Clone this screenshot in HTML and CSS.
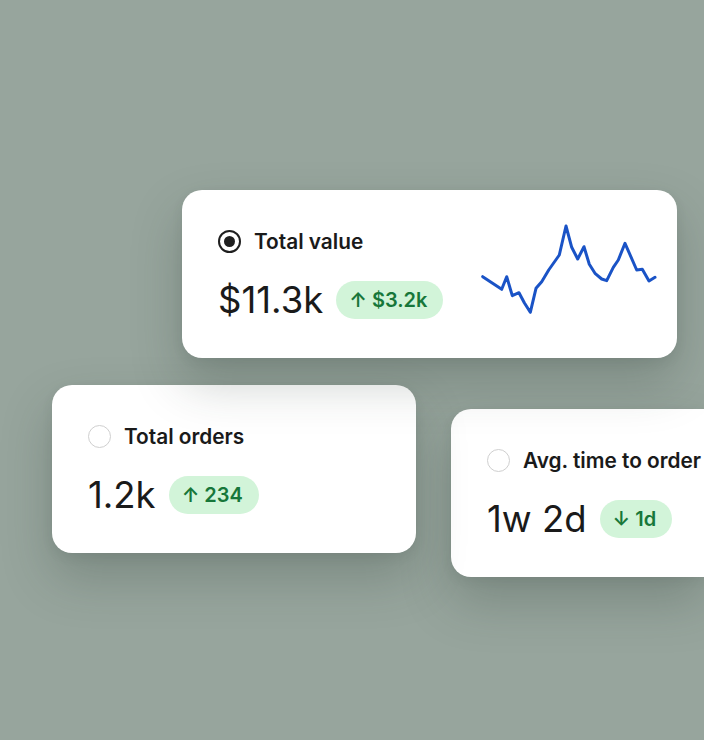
FILE: index.html
```html
<!DOCTYPE html>
<html>
<head>
<meta charset="utf-8">
<link rel="stylesheet" href="styles.css">
</head>
<body>
<div class="canvas">
  <div class="card card-main">
    <div class="metric">
      <div class="title-row">
        <span class="radio radio-on"></span>
        <span class="title">Total value</span>
      </div>
      <div class="value-row">
        <span class="value">$11.3k</span>
        <span class="badge">↑ $3.2k</span>
      </div>
    </div>
    <svg class="spark" width="184" height="98" viewBox="0 0 184 98">
      <polyline fill="none" stroke="#1a53c6" stroke-width="3" stroke-linejoin="round" stroke-linecap="round"
        points="6.7,56.7 25.7,69.3 30.7,56.7 36.3,75.7 43,72.7 48.3,82.7 54.3,92.3 60,68.3 65.7,61.7 72.7,50 83.3,35 90,6 95.7,27.3 101.7,39 108,26.7 113.3,44.3 119,53.3 125.7,59 130.7,60.7 137.3,47.3 142.3,40 149,23.3 160.7,50 166.3,49.3 173,61 179,57.3"/>
    </svg>
  </div>
  <div class="row">
    <div class="card card-orders">
      <div class="metric">
        <div class="title-row">
          <span class="radio"></span>
          <span class="title">Total orders</span>
        </div>
        <div class="value-row">
          <span class="value">1.2k</span>
          <span class="badge">↑ 234</span>
        </div>
      </div>
    </div>
    <div class="card card-time">
      <div class="metric">
        <div class="title-row">
          <span class="radio"></span>
          <span class="title">Avg. time to order</span>
        </div>
        <div class="value-row">
          <span class="value">1w 2d</span>
          <span class="badge">↓ 1d</span>
        </div>
      </div>
    </div>
  </div>
</div>
</body>
</html>
```
FILE: styles.css
```css
html, body {
  margin: 0;
  padding: 0;
}
body {
  width: 704px;
  height: 740px;
  overflow: hidden;
  background: #97a59d;
  font-family: "Inter", "Liberation Sans", sans-serif;
  color: #1a1a1a;
}
.canvas {
  padding-top: 190px;
  display: flex;
  flex-direction: column;
  width: 704px;
  overflow: hidden;
}
.card {
  box-sizing: border-box;
  height: 168px;
  background: #ffffff;
  border-radius: 20px;
  display: flex;
  align-items: center;
  padding: 0 36px;
  box-shadow: 0 24px 50px rgba(40, 55, 48, 0.25), 0 4px 12px rgba(40, 55, 48, 0.08);
  flex-shrink: 0;
}
.card-main {
  margin-left: 182px;
  width: 495px;
  padding-right: 17px;
  position: relative;
  z-index: 3;
}
.row {
  display: flex;
  align-items: flex-start;
  margin-top: 27px;
  gap: 35px;
  padding-left: 52px;
  padding-bottom: 80px;
}
.card-orders {
  width: 364px;
  position: relative;
  z-index: 2;
}
.card-time {
  width: 253px;
  border-radius: 20px 0 0 20px;
  padding-right: 0;
  margin-top: 24px;
  position: relative;
  z-index: 1;
}
.metric {
  display: flex;
  flex-direction: column;
  gap: 27px;
}
.title-row {
  display: flex;
  align-items: center;
  gap: 13px;
  height: 24px;
}
.radio {
  box-sizing: border-box;
  width: 23px;
  height: 23px;
  border-radius: 50%;
  border: 1.5px solid #cfcfcf;
  display: flex;
  align-items: center;
  justify-content: center;
  flex-shrink: 0;
}
.radio-on {
  border: 2px solid #1f1f1f;
}
.radio-on::after {
  content: "";
  width: 11px;
  height: 11px;
  border-radius: 50%;
  background: #1f1f1f;
}
.title {
  font-size: 20.8px;
  font-weight: 600;
  white-space: nowrap;
}
.value-row {
  display: flex;
  align-items: center;
  gap: 13px;
  height: 38px;
}
.value {
  font-size: 36.5px;
  font-weight: 400;
  white-space: nowrap;
}
.badge {
  height: 38px;
  box-sizing: border-box;
  padding: 0 16px 0 13px;
  border-radius: 19px;
  background: #d2f4d9;
  color: #17773a;
  font-size: 20px;
  font-weight: 600;
  display: flex;
  align-items: center;
  white-space: nowrap;
}
.spark {
  margin-left: auto;
  align-self: flex-start;
  margin-top: 30px;
}
```
